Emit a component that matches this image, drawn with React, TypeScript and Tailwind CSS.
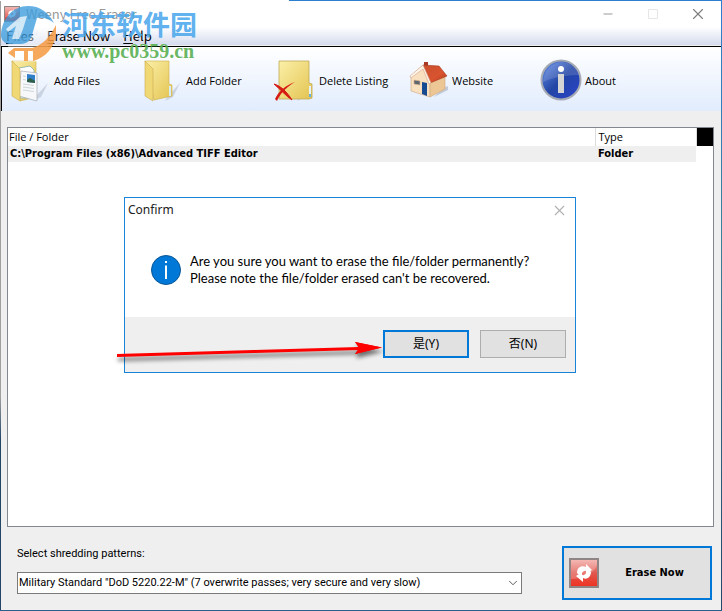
import type { ReactNode } from 'react';
import { ChevronDown, Minus, X } from 'lucide-react';

interface ToolItem {
  label: string;
  icon: ReactNode;
}

const tools: ToolItem[] = [
  { label: 'Add Files', icon: <FilesIcon /> },
  { label: 'Add Folder', icon: <FolderIcon /> },
  { label: 'Delete Listing', icon: <DeleteIcon /> },
  { label: 'Website', icon: <HouseIcon /> },
  { label: 'About', icon: <AboutIcon /> },
];

const menus = [
  { key: 'F', rest: 'iles' },
  { key: 'E', rest: 'rase Now' },
  { key: 'H', rest: 'elp' },
];

export default function App() {
  return (
    <div className="relative flex min-h-screen flex-col bg-[#efefef] font-['Open_Sans','Noto_Sans_CJK_SC',sans-serif] text-[11px] text-black">
      <div className="h-px bg-[linear-gradient(to_right,#ffffff_40%,#2b7fd0_40%)]" />
      <div className="flex flex-1">
        <div className="w-px bg-[linear-gradient(#a0a0a0_65%,#234668_72%)]" />
        <div className="flex min-w-0 flex-1 flex-col">
          <TitleBar />
          <MenuBar />
          <Toolbar />
          <main className="flex flex-1 flex-col pt-4 pr-[7px] pl-1.5">
            <FileList />
            <Footer />
          </main>
        </div>
        <div className="w-px bg-[linear-gradient(#2b7fd0,#3a8098_40%,#234668)]" />
      </div>
      <div className="h-px bg-[#2a5f8e]" />
      <ConfirmDialog />
      <Pointer />
      <Watermark />
    </div>
  );
}

function TitleBar() {
  return (
    <header className="flex h-[26px] items-center bg-white pl-[3px]">
      <EraserIcon className="size-4" />
      <h1 className="ml-1.5 flex-1 font-['Noto_Sans_CJK_SC',sans-serif] text-[13px] leading-[18px] text-[#999999]">
        Weeny Free Eraser
      </h1>
      <button aria-label="Minimize" className="flex w-[45px] justify-center text-[#8c8c8c]">
        <Minus size={14} strokeWidth={1.5} />
      </button>
      <button aria-label="Maximize" disabled className="flex w-[45px] justify-center text-[#e6e6e6]">
        <svg viewBox="0 0 10 10" className="size-2.5">
          <path d="M.5.5h9v9h-9z" fill="none" stroke="currentColor" />
        </svg>
      </button>
      <button aria-label="Close" className="flex w-[46px] justify-center text-[#7d7d7d]">
        <X size={18} strokeWidth={1.5} />
      </button>
    </header>
  );
}

function MenuBar() {
  return (
    <nav className="flex h-[18px] items-center gap-[13px] bg-linear-to-b from-white to-[#d5dbee] pl-[5px] font-['Noto_Sans_CJK_SC',sans-serif] text-[13px]">
      {menus.map((menu) => (
        <button key={menu.key} className="leading-[18px]">
          <span className="underline underline-offset-2">{menu.key}</span>
          {menu.rest}
        </button>
      ))}
    </nav>
  );
}

function Toolbar() {
  return (
    <div className="mt-px flex h-[65px] items-center border-t border-l border-black bg-linear-to-b from-white to-[#e1ecfd] pt-1 pl-2">
      {tools.map((tool) => (
        <button key={tool.label} className="flex w-[132px] items-center">
          {tool.icon}
          {tool.label}
        </button>
      ))}
    </div>
  );
}

function FileList() {
  return (
    <div className="min-h-[160px] flex-1 border border-[#828790] bg-white">
      <table className="w-full table-fixed border-collapse text-left">
        <thead>
          <tr className="h-[18px]">
            <th className="border-r border-[#dcdcdc] pl-px font-normal">File / Folder</th>
            <th className="w-[101px] border-r border-[#dcdcdc] pl-[3px] font-normal">Type</th>
            <th className="w-[17px] bg-black" aria-label="Spacer" />
          </tr>
        </thead>
        <tbody>
          <tr className="h-4 font-['DejaVu_Sans_Condensed','DejaVu_Sans',sans-serif] font-bold leading-4">
            <td className="bg-[#efefef] pl-0.5">C:\Program Files (x86)\Advanced TIFF Editor</td>
            <td className="bg-[#efefef] pl-[3px]">Folder</td>
            <td />
          </tr>
        </tbody>
      </table>
    </div>
  );
}

function Footer() {
  return (
    <footer className="flex items-end pt-[19px] pb-2.5 pl-2.5">
      <div className="flex min-w-0 flex-1 flex-col gap-2.5 pb-1.5 font-['Roboto','Noto_Sans_CJK_SC',sans-serif]">
        <label htmlFor="pattern" className="leading-4">
          Select shredding patterns:
        </label>
        <div className="relative max-w-[505px]">
          <select
            id="pattern"
            className="h-[22px] w-full appearance-none border border-[#7a7a7a] bg-white pl-px pr-5"
          >
            <option>Military Standard "DoD 5220.22-M" (7 overwrite passes; very secure and very slow)</option>
          </select>
          <ChevronDown
            size={14}
            strokeWidth={1.5}
            className="pointer-events-none absolute top-1 right-0.5 text-[#444444]"
          />
        </div>
      </div>
      <button className="mr-0.5 flex h-[54px] w-[150px] items-center border-2 border-[#0078d7] bg-[#e1e1e1] pl-[5px] font-['DejaVu_Sans_Condensed','DejaVu_Sans',sans-serif] font-bold">
        <EraserIcon className="size-[30px]" />
        <span className="flex-1">Erase Now</span>
      </button>
    </footer>
  );
}

function ConfirmDialog() {
  return (
    <div
      role="dialog"
      aria-labelledby="confirm-title"
      className="absolute top-[197px] left-[124px] w-[452px] border border-[#1883d7] bg-white font-['Noto_Sans','Noto_Sans_CJK_SC',sans-serif] text-[12px]"
    >
      <div className="flex h-6 items-center justify-between pr-[7px] pl-[3px]">
        <h2 id="confirm-title" className="text-[#222222]">
          Confirm
        </h2>
        <button aria-label="Close" className="text-[#b0b0b0]">
          <X size={17} strokeWidth={1.5} />
        </button>
      </div>
      <div className="flex h-[95px] items-center gap-[9px] pl-[26px]">
        <svg viewBox="0 0 30 30" className="size-[30px]">
          <circle cx="15" cy="15" r="14.5" fill="#0078d7" stroke="#0a5796" />
          <path d="M14 6h2v2h-2zM14 10.500h2V24h-2z" fill="#fff" />
        </svg>
        <p className="font-['Lato','Noto_Sans',sans-serif] text-[13px] leading-[17px]">
          Are you sure you want to erase the file/folder permanently?
          <br />
          Please note the file/folder erased can't be recovered.
        </p>
      </div>
      <div className="flex h-[55px] justify-end gap-[11px] bg-[#efefef] pt-[13px] pr-[9px]">
        <button className="h-7 w-[86px] border-2 border-[#0078d7] bg-[#e1e1e1]">是(Y)</button>
        <button className="h-7 w-[86px] border border-[#adadad] bg-[#e1e1e1]">否(N)</button>
      </div>
    </div>
  );
}

function Pointer() {
  return (
    <svg
      viewBox="0 0 272 28"
      className="pointer-events-none absolute top-[338px] left-[115px] h-7 w-[272px] drop-shadow-[1px_4px_2px_rgba(0,0,0,0.55)]"
    >
      <path d="M2 16 244 9 240 4 267 9.500 240 16 244 12 2 19Z" fill="#f00" />
      <path d="m240 4 27 5.500L240 16l4-6z" fill="#f00" />
    </svg>
  );
}

function Watermark() {
  return (
    <div className="pointer-events-none absolute top-[5px] left-0 flex gap-1.5">
      <svg viewBox="0 0 56 58" className="h-[58px] w-14">
        <path d="M12 17 24 11 19 33 38 30 40 18 50 22 48 43 40 57 14 57 8 42Z" fill="#fff" opacity=".4" />
        <path
          d="M1 30C2 13 13 1 28 1c12 0 20 6 26 17-5-4-10-6-17-5l-5 17c-1 5-5 9-11 9H9c-5-1-8-4-8-9Z"
          fill="#3b9bdc"
          opacity=".78"
        />
        <path d="M6 24 20 12l7-1-4 13-4 10h-7l4-13-8 6Z" fill="#fff" opacity=".7" />
        <path
          d="M56 20c2 18-8 32-23 36V46h-5v10h-4V46h-9v7L8 48l6-5h18c11-3 18-11 24-23Z"
          fill="#f5993f"
          opacity=".85"
        />
      </svg>
      <div className="flex flex-col">
        <span className="font-['Noto_Sans_CJK_SC',sans-serif] text-[27px] leading-[37px] font-bold text-[#4ba7ec]/90">
          河东软件园
        </span>
        <span className="font-['Liberation_Serif',serif] text-[20px] leading-[18px] font-bold text-[#56ae4f]/90">
          www.pc0359.cn
        </span>
      </div>
    </div>
  );
}

function EraserIcon({ className }: { className: string }) {
  return (
    <svg viewBox="0 0 30 30" className={className}>
      <defs>
        <linearGradient id="eraser-red" x1="0" y1="0" x2="0" y2="1">
          <stop offset="0" stopColor="#f3a9a4" />
          <stop offset=".5" stopColor="#e0574e" />
          <stop offset="1" stopColor="#f0301f" />
        </linearGradient>
      </defs>
      <rect x="1" y="1" width="28" height="28" fill="url(#eraser-red)" stroke="#8f8585" strokeWidth="2" />
      <path d="M2 2h26v5C24 17 12 21 2 21z" fill="#fff" opacity=".22" />
      <path d="M8 15C8 10 12 7 17 9V6l6 6-6 4v-3c-3-1-4 4-8 3Z" fill="#fff" />
      <path d="M22 14c0 5-4 8-8 6v4l-7-6 6-4v3c4 1 4-4 8-4Z" fill="#fff" />
    </svg>
  );
}

function FolderBase() {
  return (
    <>
      <defs>
        <linearGradient id="folder" x1="0" y1="0" x2="1" y2="1">
          <stop offset="0" stopColor="#fbf0a8" />
          <stop offset="1" stopColor="#e3c350" />
        </linearGradient>
      </defs>
      <path d="M26 37 38 24l-7 14-8 4z" fill="#8f9bb0" opacity=".35" />
    </>
  );
}

function FilesIcon() {
  return (
    <svg viewBox="0 0 44 44" className="h-11 w-11 shrink-0">
      <FolderBase />
      <path d="M2 2h24v36l-16 4z" fill="url(#folder)" stroke="#cfae4a" strokeWidth=".6" />
      <path d="M9 9 20 7l4 4v28H10z" fill="#fff" stroke="#98b9ae" />
      <path d="m11 12 16 2v28l-18-5z" fill="#f6f8fa" stroke="#a7aeb6" strokeWidth=".7" />
      <path d="m17 15 8 1v8l-8-1z" fill="#2f7fc9" />
      <path d="m17 21 3-2 5 3v2l-8-1z" fill="#305f48" />
      <path d="m13 17 3 .5m-3 3 3 .5m-3 4 11 1.500m-11 1.500 11 1.500m-11 1.500 11 1.500" stroke="#cfd5da" />
      <path d="m2 2 8 8v32l-8-5z" fill="#f0d975" stroke="#c9aa4d" strokeWidth=".6" />
    </svg>
  );
}

function FolderIcon() {
  return (
    <svg viewBox="0 0 44 44" className="h-11 w-11 shrink-0">
      <FolderBase />
      <path d="M3 2h24v23l3 1v11l-18 4z" fill="url(#folder)" stroke="#cfae4a" strokeWidth=".6" />
      <path d="M27 27h2v10h-2z" fill="#d5ecf5" />
      <path d="m3 2 8 8v32l-8-5z" fill="#f0d975" stroke="#c9aa4d" strokeWidth=".6" />
    </svg>
  );
}

function DeleteIcon() {
  return (
    <svg viewBox="0 0 44 44" className="mr-px h-11 w-11 shrink-0">
      <FolderBase />
      <path d="M5 2h30v22l3 1v14l-3 1H5z" fill="url(#folder)" stroke="#bfa955" strokeWidth=".8" />
      <path d="M35 27h2v11h-2z" fill="#e5f2f7" />
      <path d="M35 35h2v3h-2z" fill="#66b3df" />
      <path d="M0 25c7 2 13 8 18 16-6-4-11-10-18-16Z" fill="#d51b14" stroke="#d51b14" />
      <path d="M21 23C14 27 7 33 3 42l-2-2c3-7 11-14 20-17Z" fill="#d51b14" />
    </svg>
  );
}

function HouseIcon() {
  return (
    <svg viewBox="0 0 44 44" className="mr-0.5 h-11 w-11 shrink-0">
      <defs>
        <linearGradient id="roof" x1="0" y1="0" x2="1" y2="1">
          <stop offset="0" stopColor="#c9502f" />
          <stop offset=".6" stopColor="#d9532f" />
          <stop offset="1" stopColor="#b23a1c" />
        </linearGradient>
      </defs>
      <path d="m28 38 14-7v-4l-5 2z" fill="#9aa4b5" opacity=".5" />
      <path d="M5 17 17 6l7 18v14L5 32z" fill="#f8e0c0" stroke="#cfa67e" strokeWidth=".6" />
      <path d="m24 24 15-7v13l-15 8z" fill="#ecc795" stroke="#cfa67e" strokeWidth=".6" />
      <path d="M18 3h4v7h-4z" fill="#a63a24" />
      <path d="M17 6 33 7l8 10-17 7z" fill="url(#roof)" stroke="#a7371f" strokeWidth=".6" />
      <path d="M17 6 4 17l1 2 12-9 6 15 2-1z" fill="#fff4e8" stroke="#d2a58a" strokeWidth=".6" />
      <path d="m8 21 6 1v4l-6-1z" fill="#5c6570" stroke="#dcb287" strokeWidth=".6" />
      <path d="m16 23 5 1v13l-5-2z" fill="#174b91" />
    </svg>
  );
}

function AboutIcon() {
  return (
    <svg viewBox="0 0 44 44" className="mr-[3px] h-11 w-11 shrink-0">
      <defs>
        <linearGradient id="about" x1="0" y1="0" x2="1" y2="1">
          <stop offset="0" stopColor="#6a95ea" />
          <stop offset=".5" stopColor="#2345a5" />
          <stop offset="1" stopColor="#2b44cc" />
        </linearGradient>
      </defs>
      <circle cx="23" cy="21" r="19.500" fill="url(#about)" stroke="#a6aab3" strokeWidth="2" />
      <path d="M5 23C6 11 14 3 24 3c9 0 15 6 17 13-12 0-25 2-36 7Z" fill="#fff" opacity=".14" />
      <circle cx="23" cy="10" r="3" fill="#fff" />
      <path d="M20 15h6v19h-6z" fill="#d5d5d5" />
    </svg>
  );
}
